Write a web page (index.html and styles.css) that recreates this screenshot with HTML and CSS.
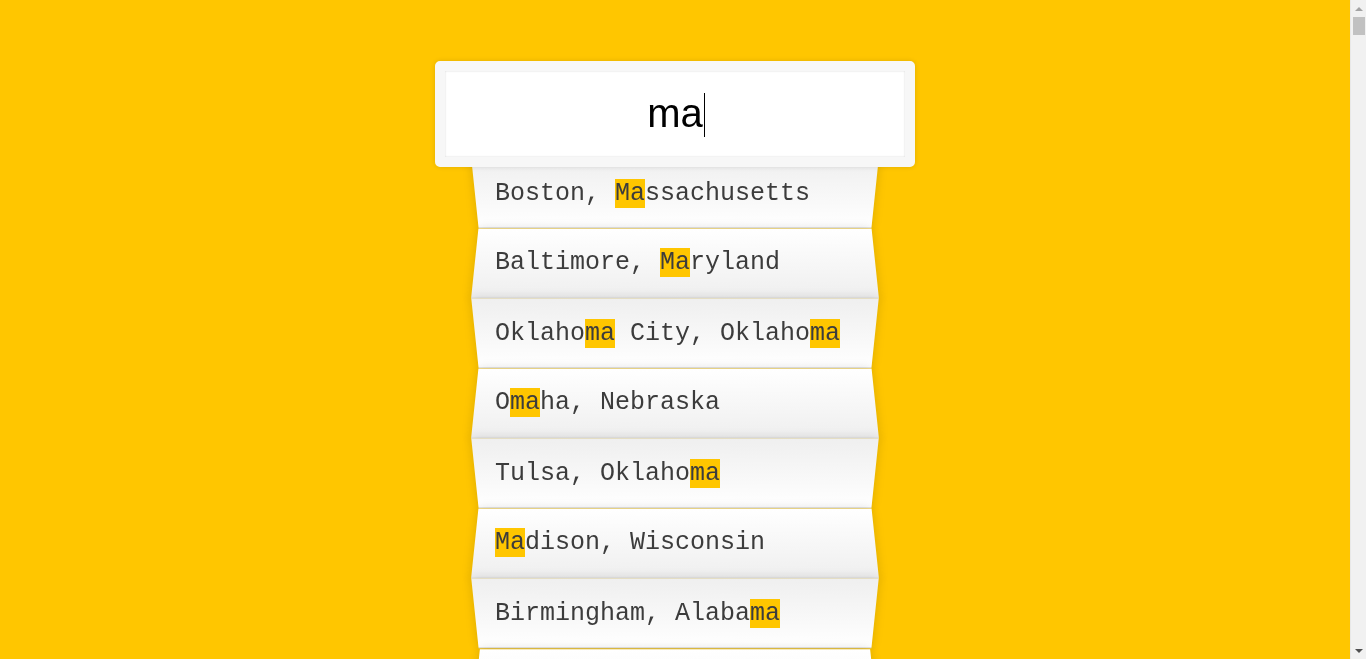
FILE: index.html
```html
<!DOCTYPE html>
<html lang="en">
<head>
<meta charset="UTF-8">
<title>Type Ahead</title>
<link rel="stylesheet" href="styles.css">
</head>
<body>
<form class="search-form">
  <div class="search">ma<span class="caret"></span></div>
  <ul class="suggestions">
    <li><span class="name">Boston, <span class="hl">Ma</span>ssachusetts</span></li>
    <li><span class="name">Baltimore, <span class="hl">Ma</span>ryland</span></li>
    <li><span class="name">Oklaho<span class="hl">ma</span> City, Oklaho<span class="hl">ma</span></span></li>
    <li><span class="name">O<span class="hl">ma</span>ha, Nebraska</span></li>
    <li><span class="name">Tulsa, Oklaho<span class="hl">ma</span></span></li>
    <li><span class="name"><span class="hl">Ma</span>dison, Wisconsin</span></li>
    <li><span class="name">Birmingham, Alaba<span class="hl">ma</span></span></li>
    <li><span class="name">Worcester, <span class="hl">Ma</span>ssachusetts</span></li>
    <li><span class="name">Montgomery, Alaba<span class="hl">ma</span></span></li>
    <li><span class="name">Springfield, <span class="hl">Ma</span>ssachusetts</span></li>
  </ul>
</form>
<div class="scrollbar">
  <span class="arrow up"></span>
  <span class="thumb"></span>
  <span class="arrow down"></span>
</div>
</body>
</html>
```
FILE: styles.css
```css
html {
  box-sizing: border-box;
  background: #ffc600;
  font-family: "Liberation Mono", "Courier New", monospace;
  font-size: 25px;
}

*, *::before, *::after {
  box-sizing: inherit;
}

body {
  margin: 0 16px 0 0;
  padding-top: 1px;
}

.search-form {
  max-width: 400px;
  margin: 49px auto 50px;
}

.search {
  position: relative;
  top: 11px;
  left: -10%;
  width: 120%;
  z-index: 2;
  margin: 0;
  padding: 20px;
  border: 10px solid #f7f7f7;
  border-radius: 5px;
  background: #fff;
  text-align: center;
  font-family: "Liberation Sans", Arial, sans-serif;
  font-size: 40px;
  line-height: 45px;
  color: #000;
  box-shadow: 0 0 5px rgba(0, 0, 0, 0.12), inset 0 0 2px rgba(0, 0, 0, 0.19);
}

.caret {
  display: inline-block;
  width: 1px;
  height: 44px;
  background: #000;
  vertical-align: -10px;
  margin-left: 1px;
  margin-right: -2px;
}

.suggestions {
  margin: 0;
  padding: 0;
  position: relative;
}

.suggestions li {
  position: relative;
  z-index: 0;
  list-style: none;
  margin: 0;
  padding: 20px 20px 21px;
  display: flex;
  justify-content: space-between;
  color: #3c3c3c;
  line-height: 29px;
}

.suggestions li::before {
  content: "";
  position: absolute;
  top: 0;
  left: 0;
  right: 0;
  bottom: 0;
  z-index: -1;
  border-bottom: 1px solid #d8d8d8;
  box-shadow: 0 0 10px rgba(0, 0, 0, 0.14);
}

.suggestions li:nth-child(even) {
  transform: translateY(2px);
}

.suggestions li:nth-child(even)::before {
  transform: perspective(100px) rotateX(3deg) scale(1.001);
  background: linear-gradient(to bottom, #ffffff 0%, #efefef 100%);
}

.suggestions li:nth-child(odd) {
  transform: translateY(3px);
}

.suggestions li:nth-child(odd)::before {
  transform: perspective(100px) rotateX(-3deg);
  background: linear-gradient(to top, #ffffff 0%, #efefef 100%);
}

.hl {
  background: #ffc600;
}

.scrollbar {
  position: fixed;
  top: 0;
  right: 0;
  width: 16px;
  height: 100%;
  background: #f1f1f1;
  border-left: 1px solid #e8e8e8;
  display: flex;
  flex-direction: column;
  align-items: center;
  z-index: 10;
}

.arrow {
  width: 0;
  height: 0;
  border-left: 4px solid transparent;
  border-right: 4px solid transparent;
}

.arrow.up {
  margin-top: 7px;
  border-bottom: 4px solid #a3a3a3;
}

.arrow.down {
  margin-top: auto;
  margin-bottom: 6px;
  border-top: 4px solid #505050;
}

.thumb {
  margin-top: 6px;
  width: 12px;
  height: 18px;
  background: #c1c1c1;
}
```
